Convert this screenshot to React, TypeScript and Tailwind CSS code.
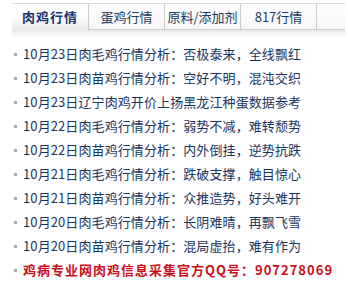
import React from 'react';

const tabs = ['肉鸡行情', '蛋鸡行情', '原料/添加剂', '817行情'];

const news = [
  '10月23日肉毛鸡行情分析：否极泰来，全线飘红',
  '10月23日肉苗鸡行情分析：空好不明，混沌交织',
  '10月23日辽宁肉鸡开价上扬黑龙江种蛋数据参考',
  '10月22日肉毛鸡行情分析：弱势不减，难转颓势',
  '10月22日肉苗鸡行情分析：内外倒挂，逆势抗跌',
  '10月21日肉毛鸡行情分析：跌破支撑，触目惊心',
  '10月21日肉苗鸡行情分析：众推造势，好头难开',
  '10月20日肉毛鸡行情分析：长阴难晴，再飘飞雪',
  '10月20日肉苗鸡行情分析：混局虚抬，难有作为',
];

export default function App() {
  return (
    <div
      className="w-[348px] h-[286px] bg-white overflow-hidden pt-[3px]"
      style={{ fontFamily: '"Noto Sans CJK SC", "Noto Sans", sans-serif' }}
    >
      {/* Tabs */}
      <div className="ml-[12px] w-[333px]">
        <div className="flex h-[27px] border-t border-[#dcdcdc]">
          {tabs.map((t, i) =>
            i === 0 ? (
              <div
                key={t}
                className="w-[76px] flex items-center justify-center bg-gradient-to-b from-white via-white to-[#e8e8e8] text-[13px] font-bold text-[#17336b] tracking-[1px]"
              >
                {t}
              </div>
            ) : (
              <div
                key={t}
                className="w-[76px] flex items-center justify-center border-l border-b border-[#cfcfcf] bg-gradient-to-b from-white to-[#f6f6f6] text-[13px] text-[#1c3a63]"
              >
                {t}
              </div>
            )
          )}
          <div className="flex-1 border-l border-b border-[#cfcfcf] bg-gradient-to-b from-white to-[#f6f6f6]" />
        </div>
        <div className="h-[8px] bg-gradient-to-b from-[#e8e8e8] to-white" />
      </div>

      {/* List */}
      <ul className="mt-[4px]">
        {news.map((n) => (
          <li key={n} className="flex items-center h-[24px] pl-[14px]">
            <span className="w-[3px] h-[3px] bg-[#a8a8a8] mr-[6px]" />
            <span className="text-[13px] tracking-[0.1px] text-[#1a3560] whitespace-nowrap">{n}</span>
          </li>
        ))}
        <li className="flex items-center h-[24px] pl-[14px]">
          <span className="w-[3px] h-[3px] bg-[#a8a8a8] mr-[6px]" />
          <span className="text-[13px] font-bold tracking-[1px] text-[#c8101a] whitespace-nowrap">
            鸡病专业网肉鸡信息采集官方QQ号：907278069
          </span>
        </li>
      </ul>
    </div>
  );
}
